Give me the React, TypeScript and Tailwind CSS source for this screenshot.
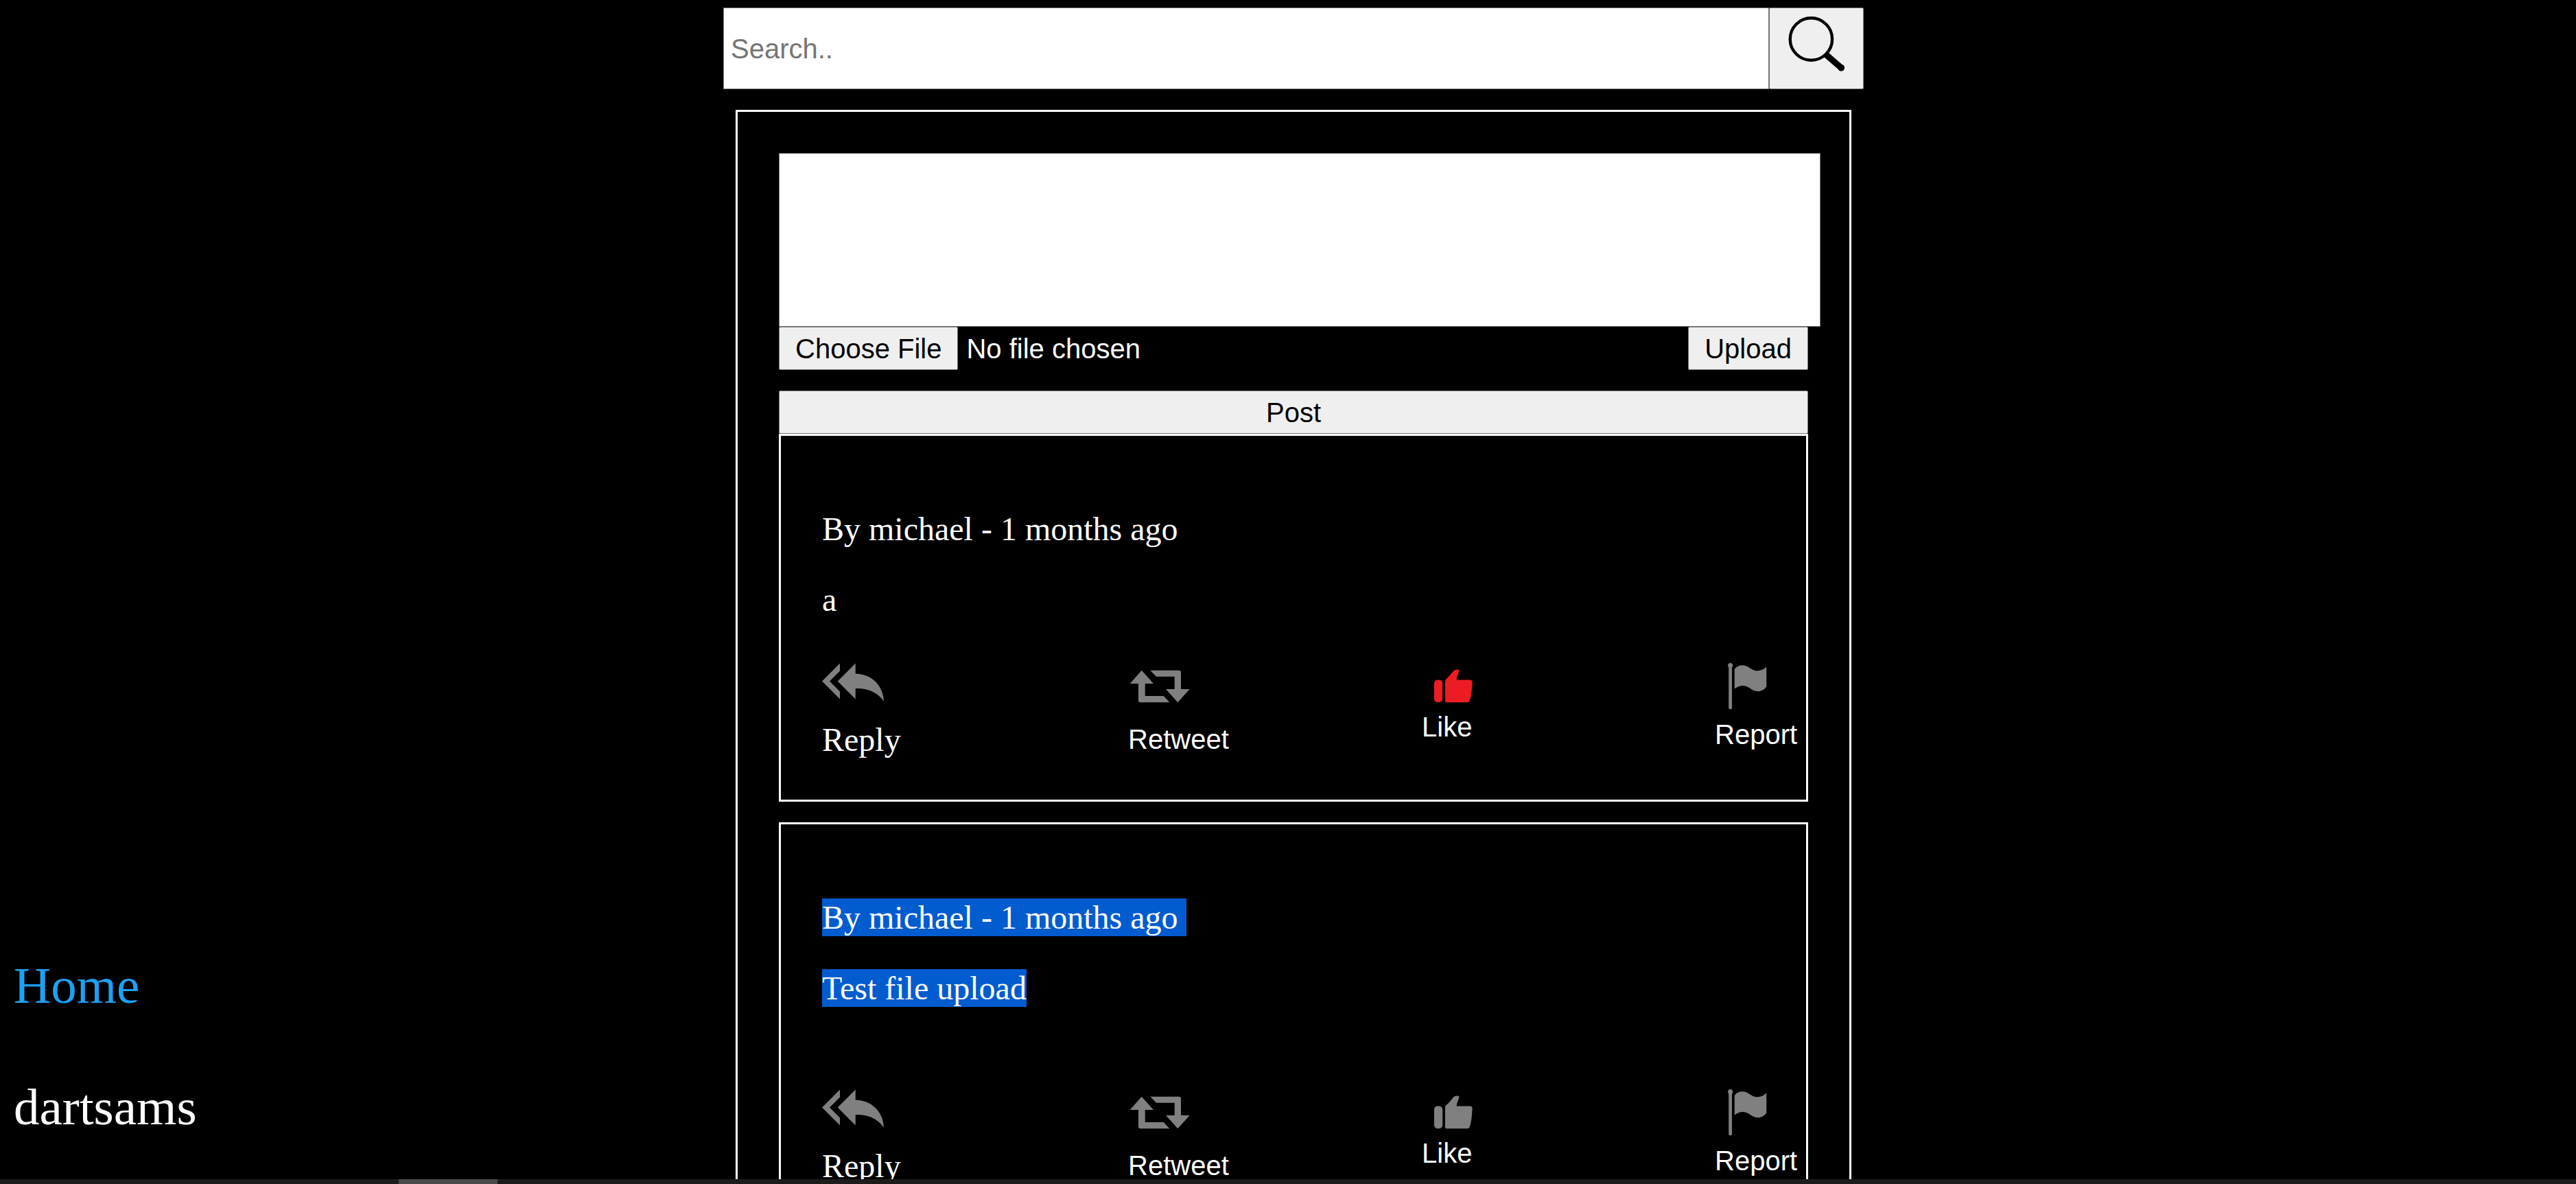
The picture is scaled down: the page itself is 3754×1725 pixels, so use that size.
import React from "react";

const sans = "font-['Liberation_Sans',Arial,sans-serif]";

function SearchIcon() {
  return (
    <svg viewBox="1 1 136 117" className="h-[117px] w-[136px]" aria-hidden="true">
      <circle cx="61.4" cy="46" r="30.7" fill="none" stroke="#000" strokeWidth="4.4" />
      <path d="M83.5 69 L105.3 87.8" stroke="#000" strokeWidth="9" fill="none" />
      <circle cx="105.2" cy="87.8" r="4.9" />
    </svg>
  );
}

function ReplyIcon() {
  return (
    <svg viewBox="0 0 92 101" className="h-[101px] w-[92px]" fill="#808080" aria-hidden="true">
      <path d="M0 43.5 L26 17.5 V28.5 L11 43.5 L26 58.5 V69.5 Z" />
      <path d="M22.7 43.5 L48.7 17.5 V32.5 C74 33.5 89 50.5 90 73 C82 60.5 68 53.5 48.7 54 V69.5 Z" />
    </svg>
  );
}

function RetweetIcon() {
  return (
    <svg viewBox="0 0 92 105" className="h-[105px] w-[92px]" fill="#808080" aria-hidden="true">
      <path d="M19.7 27.7 L37 47 H24.7 V65 H51.7 L60.3 74.3 H18 Q15 74.3 15 71.3 V47 H2.7 Z" />
      <path d="M32.3 27.7 H74 Q77 27.7 77 30.7 V55 H89.7 L72.3 74.3 L55 55 H67.7 V36.7 H41 Z" />
    </svg>
  );
}

function LikeIcon({ active }: { active: boolean }) {
  return (
    <svg viewBox="0 0 80 87" className="h-[87px] w-[80px]" fill={active ? "#ed1c24" : "#808080"} aria-hidden="true">
      <rect x="18" y="41.5" width="12.2" height="32.8" rx="5" />
      <path d="M34 43 Q34 41.2 35.6 40.2 C41 36 44 30 47.6 27.6 Q50.5 25.8 54.4 27 C54.4 32 51 36 50.6 41.5 H70 Q73.8 41.5 73.6 45.5 C73.2 53 72.5 62 71 68 Q69.5 74.3 66.5 74.3 H36 Q34 74.3 34 72 Z" />
    </svg>
  );
}

function FlagIcon() {
  return (
    <svg viewBox="0 0 80 98" className="h-[98px] w-[80px]" fill="#808080" aria-hidden="true">
      <circle cx="22.6" cy="20.6" r="3.5" />
      <rect x="20.2" y="20" width="4.8" height="64.3" rx="2" />
      <path d="M28.7 26 C33 20 41 18.5 48 22.5 C54 26 57 28.5 62 28.3 C68 28 72 25.5 75.2 22.5 V51.5 C70 58.5 62 60.5 54 55.5 C45 49 38 48 28.7 54.5 Z" />
    </svg>
  );
}

const action = `flex flex-col items-start text-left text-[40px] leading-[46px] whitespace-nowrap ${sans}`;

type PostProps = { author: string; age: string; text: string; liked?: boolean; selected?: boolean; attachment?: boolean };

function Post({ author, age, text, liked = false, selected = false, attachment = false }: PostProps) {
  const mark = selected ? "bg-[#005ccf]" : "";
  return (
    <article className="border-[3px] border-white p-[60px] text-[48px] leading-[55px]">
      <p className="mt-12 w-fit whitespace-pre">
        <span className={`block ${mark}`}>{`By ${author} - ${age} ago `}</span>
      </p>
      <p className={`mt-12 w-fit ${mark}`}>{text}</p>
      {attachment && <div className="h-[55px]" />}
      <div className="mt-12 grid grid-cols-[minmax(0,446fr)_minmax(0,428fr)_minmax(0,427fr)_minmax(0,73fr)] items-start">
        <a href="#reply" className="flex flex-col items-start">
          <ReplyIcon />
          Reply
        </a>
        <button type="button" className={action}>
          <RetweetIcon />
          Retweet
        </button>
        <button type="button" className={action}>
          <LikeIcon active={liked} />
          Like
        </button>
        <button type="button" className={action}>
          <FlagIcon />
          Report
        </button>
      </div>
    </article>
  );
}

const control = `h-[63px] rounded-xs border border-[#767676] bg-[#efefef] px-[23px] text-[40px] leading-[46px] text-black ${sans}`;

export default function App() {
  return (
    <div className="flex h-screen flex-col overflow-hidden bg-black font-['Liberation_Serif','Times_New_Roman',serif] text-white">
      <div className="grid min-h-0 flex-1 grid-cols-[minmax(0,1054fr)_minmax(0,1662fr)_minmax(0,1038fr)] overflow-hidden">
        <nav className="flex min-h-0 flex-col items-start justify-end gap-[91px] pb-[62px] pl-5 text-[75px] leading-[86px]">
          <a href="#home" className="text-[#1da1f2]">Home</a>
          <a href="#profile">dartsams</a>
        </nav>
        <main className="min-h-0 pt-[11px]">
          <form className="flex h-[119px]" role="search" onSubmit={(e) => e.preventDefault()}>
            <input
              type="text"
              aria-label="Search"
              placeholder="Search.."
              className={`min-w-0 flex-1 border border-[#767676] bg-white px-2.5 text-[40px] text-black placeholder:text-[#757575] ${sans}`}
            />
            <button type="submit" aria-label="Search" className="w-[138px] rounded-xs border border-[#767676] bg-[#efefef]">
              <SearchIcon />
            </button>
          </form>
          <section className="mx-[18px] mt-[30px] border-[3px] border-white p-[60px]">
            <form onSubmit={(e) => e.preventDefault()}>
              <textarea
                aria-label="Post text"
                className={`block h-[253px] w-[calc(100%+18px)] resize-none border border-[#767676] bg-white p-2 text-[40px] text-black ${sans}`}
              />
              <div className="flex items-start justify-between">
                <input
                  type="file"
                  aria-label="Attach a file"
                  className={`h-[63px] min-w-0 flex-1 text-[40px] leading-[46px] file:mr-3 file:h-[63px] file:rounded-xs file:border file:border-solid file:border-[#767676] file:bg-[#efefef] file:px-[23px] file:text-black ${sans}`}
                />
                <button type="button" className={control}>Upload</button>
              </div>
              <button type="submit" className={`mt-[30px] block w-full ${control}`}>Post</button>
            </form>
            <div className="flex flex-col gap-[30px]">
              <Post author="michael" age="1 months" text="a" liked />
              <Post author="michael" age="1 months" text="Test file upload" selected attachment />
            </div>
          </section>
        </main>
      </div>
      <div className="grid h-[7px] shrink-0 grid-cols-[581fr_144fr_3029fr] bg-[#1e1b1b]">
        <div className="col-start-2 bg-[#4a4a4a]" />
      </div>
    </div>
  );
}
